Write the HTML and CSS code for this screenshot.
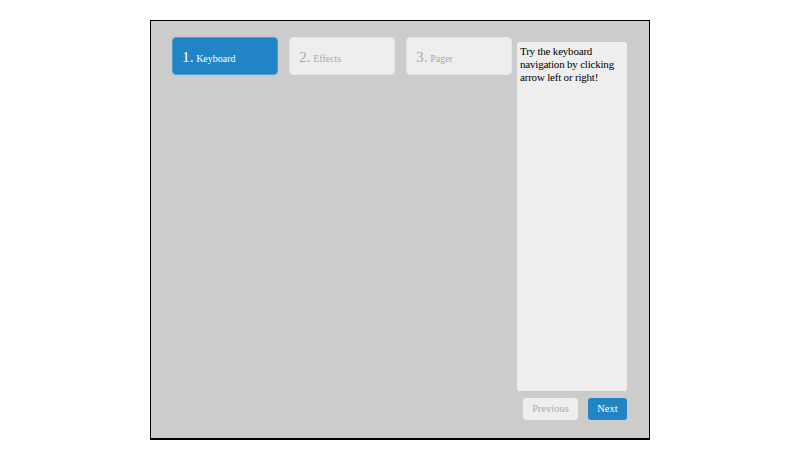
FILE: index.html
```html
<!DOCTYPE html>
<html>
<head>
<meta charset="utf-8">
<link rel="stylesheet" href="styles.css">
</head>
<body>
<div class="wizard">
  <ul class="steps">
    <li class="step current"><span class="num">1.</span> Keyboard</li>
    <li class="step"><span class="num">2.</span> Effects</li>
    <li class="step"><span class="num">3.</span> Pager</li>
  </ul>
  <div class="side">
    <div class="content">Try the keyboard navigation by clicking arrow left or right!</div>
    <div class="actions">
      <a class="btn disabled">Previous</a>
      <a class="btn primary">Next</a>
    </div>
  </div>
</div>
</body>
</html>
```
FILE: styles.css
```css
html, body {
  margin: 0;
  padding: 0;
  background: #fff;
}
body {
  font-family: "Liberation Serif", "Times New Roman", serif;
  padding: 20px 0 0 150px;
}
.wizard {
  box-sizing: border-box;
  width: 500px;
  height: 420px;
  border: 1px solid #000;
  border-bottom-width: 2px;
  background: #ccc;
  padding: 16px 22px 0 21px;
  display: flex;
  align-items: flex-start;
}
.steps {
  list-style: none;
  margin: 0;
  padding: 0;
  display: flex;
  gap: 11px;
}
.step {
  box-sizing: border-box;
  width: 106px;
  height: 38px;
  border-radius: 4px;
  background: #eee;
  color: #aaa;
  font-size: 10px;
  padding: 10px 0 0 9px;
  line-height: 18px;
  border: 1px solid #e6e6e6;
}
.step .num {
  font-size: 15.5px;
}
.step.current {
  background: #2184c4;
  color: #fff;
  border-color: #4b9cd1;
}
.side {
  margin-left: 5px;
  margin-top: 5px;
  width: 111px;
}
.content {
  box-sizing: border-box;
  height: 349px;
  background: #eee;
  border-radius: 3px;
  padding: 3px 3px;
  font-size: 11px;
  letter-spacing: -0.2px;
  line-height: 13px;
  color: #000;
}
.actions {
  display: flex;
  justify-content: flex-end;
  gap: 10px;
  margin-top: 7px;
}
.btn {
  display: block;
  height: 22px;
  line-height: 21px;
  font-size: 10.5px;
  border-radius: 3px;
  text-align: center;
}
.btn.disabled {
  width: 55px;
  background: #eee;
  color: #aaa;
}
.btn.primary {
  width: 39px;
  background: #2184c4;
  color: #fff;
}
```
